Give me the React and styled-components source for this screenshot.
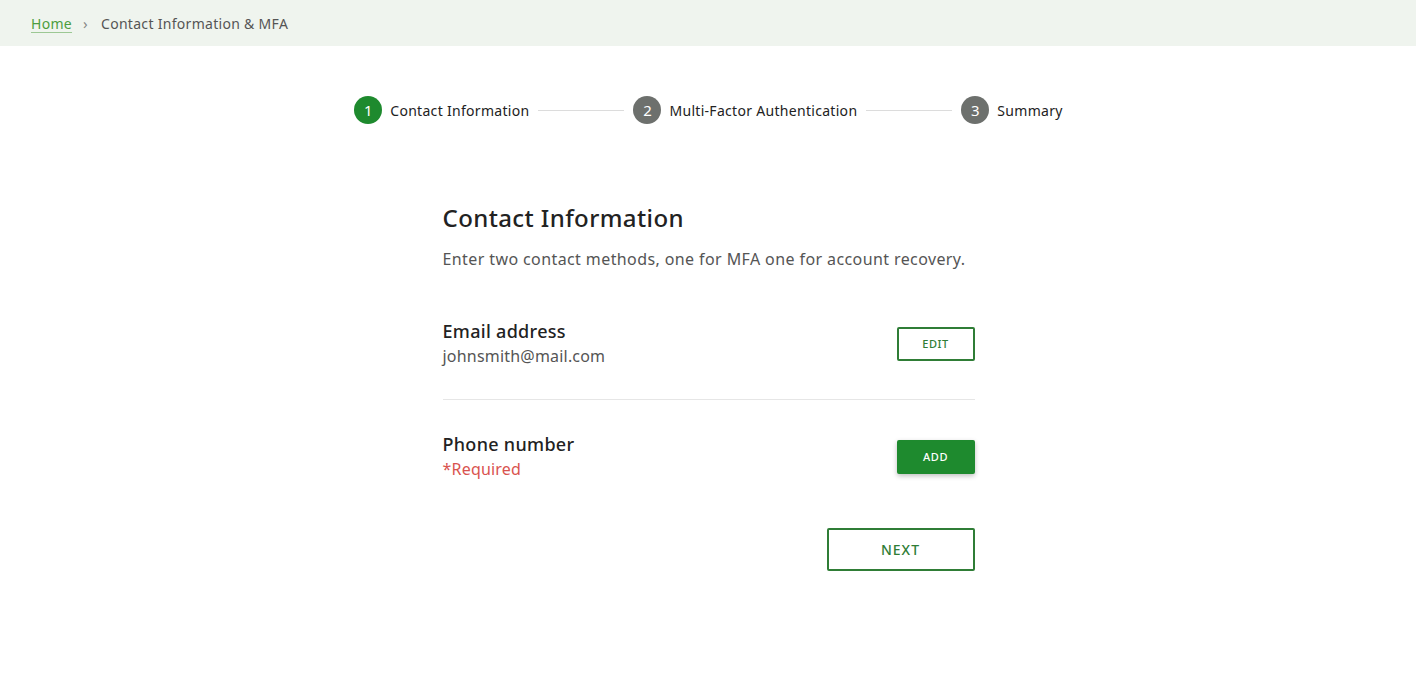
import React from "react";
import styled, { createGlobalStyle } from "styled-components";

const GlobalStyle = createGlobalStyle`
  body {
    margin: 0;
    background: #ffffff;
    font-family: "Noto Sans", "Open Sans", sans-serif;
    color: #222;
  }
`;

const steps = [
  { n: 1, label: "Contact Information", active: true },
  { n: 2, label: "Multi-Factor Authentication" },
  { n: 3, label: "Summary" },
];

const App = () => {
  return (
    <>
      <GlobalStyle />
      <TopBar>
        <Crumb href="#">Home</Crumb>
        <Chevron>›</Chevron>
        <Current>Contact Information &amp; MFA</Current>
      </TopBar>

      <Stepper>
        {steps.map((s, i) => (
          <React.Fragment key={s.n}>
            {i > 0 && <StepLine />}
            <Step>
              <StepDot active={s.active}>{s.n}</StepDot>
              <StepLabel>{s.label}</StepLabel>
            </Step>
          </React.Fragment>
        ))}
      </Stepper>

      <Content>
        <Title>Contact Information</Title>
        <Subtitle>Enter two contact methods, one for MFA one for account recovery.</Subtitle>

        <Row first>
          <Info>
            <Label>Email address</Label>
            <Value>johnsmith@mail.com</Value>
          </Info>
          <SmallButton>EDIT</SmallButton>
        </Row>
        <Divider />
        <Row>
          <Info>
            <Label>Phone number</Label>
            <Value error>*Required</Value>
          </Info>
          <SmallButton filled>ADD</SmallButton>
        </Row>

        <Footer>
          <NextButton>NEXT</NextButton>
        </Footer>
      </Content>
    </>
  );
};

export default App;

const TopBar = styled.div`
  height: 46px;
  background: #eff4ee;
  display: flex;
  align-items: center;
  padding-left: 31px;
  font-size: 14px;
  letter-spacing: 0.3px;
`;
const Crumb = styled.a`
  color: #4c9d3f;
  text-decoration: underline;
  text-underline-offset: 3px;
  text-decoration-color: #9cc894;
`;
const Chevron = styled.span`
  color: #888;
  margin: 0 13px 0 11px;
  font-size: 15px;
`;
const Current = styled.span`
  color: #555;
`;

const Stepper = styled.div`
  display: flex;
  justify-content: center;
  align-items: center;
  margin-top: 50px;
  padding-left: 1px;
`;
const Step = styled.div`
  display: flex;
  align-items: center;
  gap: 8px;
`;
const StepDot = styled.div`
  width: 28px;
  height: 28px;
  border-radius: 50%;
  background: ${(p) => (p.active ? "#1e8a2e" : "#6d706d")};
  color: #fff;
  font-size: 15px;
  display: flex;
  align-items: center;
  justify-content: center;
`;
const StepLabel = styled.span`
  font-size: 14px;
  letter-spacing: 0.3px;
  color: #222;
`;
const StepLine = styled.div`
  width: 86px;
  height: 1px;
  background: #dcdcdc;
  margin: 0 9px;
`;

const Content = styled.div`
  width: 532px;
  margin: 78px auto 0;
  padding-left: 1px;
`;
const Title = styled.h1`
  margin: 0;
  font-size: 24px;
  font-weight: 500;
  letter-spacing: 0.4px;
  color: #222;
  line-height: 32px;
`;
const Subtitle = styled.p`
  margin: 14px 0 0;
  font-size: 16px;
  letter-spacing: 0.4px;
  color: #555;
  line-height: 22px;
`;
const Row = styled.div`
  display: flex;
  justify-content: space-between;
  align-items: center;
  margin-top: ${(p) => (p.first ? "50px" : "0")};
`;
const Info = styled.div`
  display: flex;
  flex-direction: column;
  gap: 3px;
`;
const Label = styled.div`
  font-size: 18px;
  font-weight: 500;
  letter-spacing: 0.3px;
  color: #222;
  line-height: 22px;
`;
const Value = styled.div`
  font-size: 16px;
  letter-spacing: 0.2px;
  color: ${(p) => (p.error ? "#d9534f" : "#555")};
  line-height: 22px;
`;
const SmallButton = styled.button`
  width: 78px;
  height: 34px;
  font-family: inherit;
  font-size: 11px;
  font-weight: 500;
  letter-spacing: 0.6px;
  border-radius: 2px;
  cursor: pointer;
  border: 2px solid ${(p) => (p.filled ? "#1e8a2e" : "#2f7d36")};
  background: ${(p) => (p.filled ? "#1e8a2e" : "#fff")};
  color: ${(p) => (p.filled ? "#fff" : "#2f7d36")};
  box-shadow: ${(p) => (p.filled ? "0 2px 5px rgba(0,0,0,0.25)" : "none")};
`;
const Divider = styled.div`
  height: 1px;
  background: #e6e6e6;
  margin: 32px 0 33px;
`;
const Footer = styled.div`
  display: flex;
  justify-content: flex-end;
  margin-top: 48px;
`;
const NextButton = styled.button`
  width: 148px;
  height: 43px;
  background: #fff;
  border: 2px solid #2f7d36;
  border-radius: 2px;
  color: #2f7d36;
  font-family: inherit;
  font-size: 14px;
  font-weight: 500;
  letter-spacing: 1px;
  cursor: pointer;
`;
